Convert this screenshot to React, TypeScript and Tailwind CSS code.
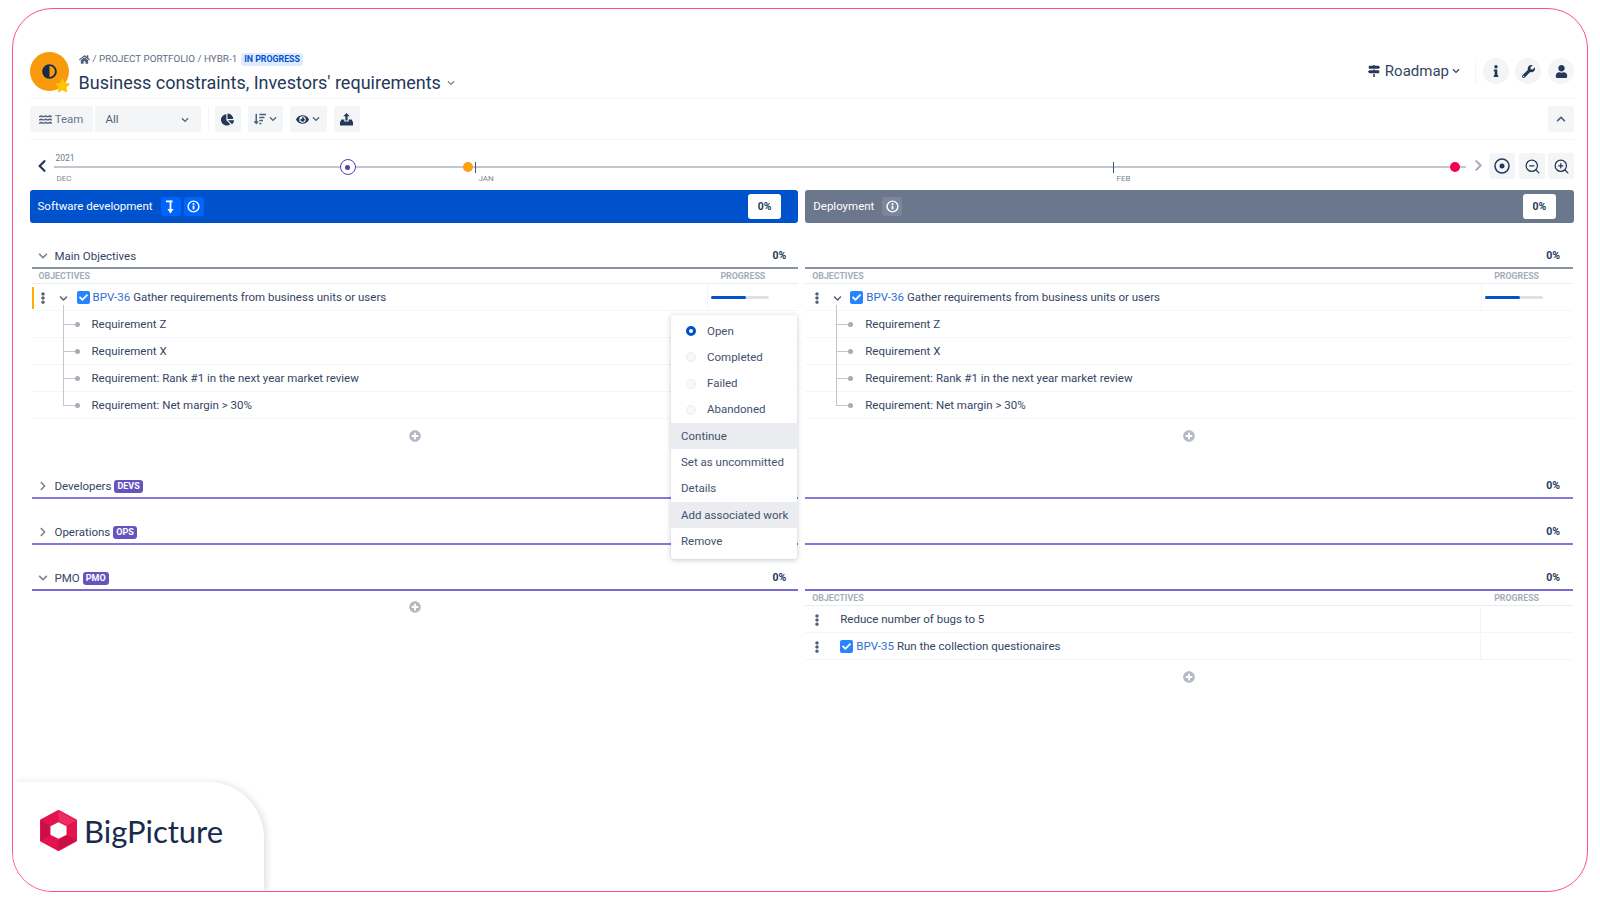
import React from "react";
import { FaHome, FaAdjust, FaStar, FaChevronDown, FaChevronUp, FaChevronLeft, FaChevronRight, FaChartPie, FaSortAmountDown, FaEye, FaInfo, FaWrench, FaUser, FaMapSigns, FaWater, FaPlusCircle, FaEllipsisV, FaCheck } from "react-icons/fa";
import { ZoomIn, ZoomOut } from "lucide-react";

const UploadIcon = () => (
  <svg width="13" height="13" viewBox="0 0 14 14" fill="#253858">
    <path d="M7 0 L10.5 3.6 H8.2 V8 H5.8 V3.6 H3.5 Z" />
    <path d="M1.5 7 H4.6 V9.2 H9.4 V7 H12.5 L14 10 V13.5 H0 V10 Z" />
  </svg>
);

const InfoRing = () => (
  <svg width="13" height="13" viewBox="0 0 13 13" fill="none">
    <circle cx="6.5" cy="6.5" r="5.4" stroke="white" strokeWidth="1.4" />
    <circle cx="6.5" cy="4" r="1" fill="white" />
    <rect x="5.6" y="5.6" width="1.8" height="3.8" fill="white" />
  </svg>
);

const ArrowDownBar = () => (
  <svg width="11" height="14" viewBox="0 0 11 14" fill="white">
    <rect x="1" y="0.5" width="6.5" height="1.8" />
    <rect x="4.6" y="0.5" width="1.8" height="10" />
    <path d="M2.4 9 H8.6 L5.5 13.5 Z" />
  </svg>
);

const DotRing = () => (
  <svg width="16" height="16" viewBox="0 0 16 16" fill="none">
    <circle cx="8" cy="8" r="7" stroke="#253858" strokeWidth="1.5" />
    <circle cx="8" cy="8" r="2.5" fill="#253858" />
  </svg>
);

const Check = () => (
  <span className="w-[13px] h-[13px] rounded-[2px] bg-[#2684ff] flex items-center justify-center shrink-0">
    <FaCheck className="text-white text-[9px]" />
  </span>
);

const Kebab = () => <FaEllipsisV className="text-[#505f79] text-[12px]" />;

const Tool = ({ children, className = "" }: { children: React.ReactNode; className?: string }) => (
  <div className={`h-[26px] bg-[#f4f5f7] rounded-[3px] flex items-center text-[#253858] ${className}`}>{children}</div>
);

const SectionHead = ({ name, badge, open, pct, line, pr = "pr-[12px]" }: { name?: string; badge?: string; open?: boolean; pct?: boolean; line: string; pr?: string }) => (
  <div className="mt-[24px]">
    <div className={`h-[20px] flex items-center ${pr}`}>
      <div className="w-[22px] mr-[1px] flex justify-center -mt-[3px]">
        {name && (open ? <FaChevronDown className="text-[#7a869a] text-[10px]" /> : <FaChevronRight className="text-[#7a869a] text-[10px]" />)}
      </div>
      {name && <span className="text-[11.5px] text-[#344563]">{name}</span>}
      {badge && <span className="ml-[3px] -mt-[2px] px-[3px] h-[13px] leading-[13px] rounded-[3px] bg-[#6554c0] text-white text-[9px] font-bold">{badge}</span>}
      {pct && <span className="ml-auto -mt-[3px] text-[10.5px] font-bold text-[#253858]">0%</span>}
    </div>
    <div className={`h-[2px] ${line}`} />
  </div>
);

const ColHead = ({ pr = "pr-[33px]" }: { pr?: string }) => (
  <div className={`h-[15px] pt-[1px] flex items-center justify-between border-b-[1.5px] border-[#ebecf0] pl-[7px] ${pr} text-[8.8px] font-bold text-[#a5adba]`}>
    <span>OBJECTIVES</span>
    <span>PROGRESS</span>
  </div>
);

const Objective = ({ marked, cell }: { marked?: boolean; cell: string }) => (
  <div className="h-[27px] flex border-b border-[#f4f5f7] relative">
    {marked && <div className="absolute left-0 top-[3px] w-[2px] h-[22px] bg-[#ffab00]" />}
    <div className="flex-1 flex items-center pt-[1px]">
      <div className="w-[23px] flex justify-center mt-[1px]"><Kebab /></div>
      <div className="w-[18px] flex justify-center mt-[1px]"><FaChevronDown className="text-[#505f79] text-[9px]" /></div>
      <div className="ml-[4px]"><Check /></div>
      <span className="ml-[3px] text-[11.5px] text-[#2f6fd6]">BPV-36</span>
      <span className="ml-[3px] text-[11.5px] text-[#344563]">Gather requirements from business units or users</span>
    </div>
    <div className={`${cell} border-l border-[#f4f5f7] flex items-center pl-[3px]`}>
      <div className="w-[58px] h-[3px] bg-[#dfe1e6] rounded-full">
        <div className="w-[35px] h-[3px] bg-[#0052cc] rounded-full" />
      </div>
    </div>
  </div>
);

const Req = ({ text, last }: { text: string; last?: boolean }) => (
  <div className="h-[27px] flex items-center pt-[1px] border-b border-[#f4f5f7] relative">
    <div className={`absolute left-[31px] top-[-6px] w-[1px] bg-[#c1c7d0] ${last ? "h-[20px]" : "h-[33px]"}`} />
    <div className="absolute left-[32px] top-[13px] w-[11px] h-[1px] bg-[#c1c7d0]" />
    <div className="absolute left-[43px] top-[11px] w-[5px] h-[5px] rounded-full bg-[#a5adba]" />
    <span className="ml-[60px] text-[11.5px] text-[#344563]">{text}</span>
  </div>
);

const Plus = () => (
  <div className="h-[34px] pt-[11px] flex justify-center">
    <FaPlusCircle className="text-[#b3bac5] text-[12px]" />
  </div>
);

const Objectives = ({ marked, cell, pr }: { marked?: boolean; cell: string; pr?: string }) => (
  <>
    <ColHead pr={pr} />
    <Objective marked={marked} cell={cell} />
    <Req text="Requirement Z" />
    <Req text="Requirement X" />
    <Req text="Requirement: Rank #1 in the next year market review" />
    <Req text="Requirement: Net margin > 30%" last />
    <Plus />
  </>
);

const Plain = ({ children }: { children: React.ReactNode }) => (
  <div className="h-[27px] flex border-b border-[#f4f5f7]">
    <div className="flex-1 flex items-center pt-[1px]">
      <div className="w-[23px] flex justify-center mt-[1px]"><Kebab /></div>
      <div className="w-[12px]" />
      {children}
    </div>
    <div className="w-[93px] border-l border-[#f4f5f7]" />
  </div>
);

const BarBtn = ({ children }: { children: React.ReactNode }) => (
  <div className="w-[20px] h-[19px] rounded-[3px] bg-[#0065ff] flex items-center justify-center text-white">{children}</div>
);

const MenuItem = ({ text, hl }: { text: string; hl?: boolean }) => (
  <div className={`h-[26.3px] flex items-center pl-[10px] text-[11.5px] text-[#42526e] ${hl ? "bg-[#ebecf0]" : ""}`}>{text}</div>
);
const Radio = ({ text, on }: { text: string; on?: boolean }) => (
  <div className="h-[26.3px] flex items-center pl-[15px] text-[11.5px] text-[#42526e]">
    {on ? (
      <span className="w-[10px] h-[10px] rounded-full border-[3px] border-[#0052cc] bg-white" />
    ) : (
      <span className="w-[10px] h-[10px] rounded-full border border-[#ebecf0] bg-[#f7f8f9]" />
    )}
    <span className="ml-[11px]">{text}</span>
  </div>
);

export default function App() {
  return (
    <div className="w-[1600px] h-[900px] bg-white pt-[8px] pl-[12px] font-['Roboto',sans-serif]">
      <div className="relative w-[1576px] h-[884px] border border-[#ff4f8b] rounded-[40px] overflow-hidden pt-[43px] pl-[16.5px] pr-[13px] bg-white">
        {/* Header */}
        <div className="h-[47px] flex items-start border-b-[1.5px] border-[#f4f5f7]">
          <div className="relative w-[39px] h-[39px] rounded-full bg-[#f89a0c] flex items-center justify-center shrink-0">
            <FaAdjust className="text-[#172b4d] text-[15px] -mt-[1px]" />
            <FaStar className="absolute left-[25px] top-[26px] text-[#ffc400] text-[15px]" />
          </div>
          <div className="ml-[10px]">
            <div className="h-[14px] flex items-center text-[9.85px] text-[#5e6c84]">
              <FaHome className="text-[#505f79] text-[11px]" />
              <span className="ml-[3px]">/ PROJECT PORTFOLIO / HYBR-1</span>
              <span className="ml-[4px] h-[13px] leading-[13px] px-[3px] rounded-[3px] bg-[#deebff] text-[#0052cc] text-[8.8px] font-bold">IN PROGRESS</span>
            </div>
            <div className="mt-[5px] flex items-center text-[#253858]">
              <span className="text-[18px] leading-[23px]">Business constraints, Investors' requirements</span>
              <FaChevronDown className="ml-[6px] text-[#7a869a] text-[8px]" />
            </div>
          </div>
          <div className="ml-auto mt-[6px] flex items-center">
            <FaMapSigns className="text-[#253858] text-[12px]" />
            <span className="ml-[5px] text-[15px] text-[#344563]">Roadmap</span>
            <FaChevronDown className="ml-[3px] text-[#344563] text-[8px]" />
            <div className="ml-[15px] w-[1px] h-[26px] bg-[#f4f5f7]" />
            <div className="ml-[7px] w-[26px] h-[26px] rounded-full bg-[#f4f5f7] flex items-center justify-center"><FaInfo className="text-[#253858] text-[12px]" /></div>
            <div className="ml-[6px] w-[26px] h-[26px] rounded-full bg-[#f4f5f7] flex items-center justify-center"><FaWrench className="text-[#253858] text-[13px]" /></div>
            <div className="ml-[7px] w-[26px] h-[26px] rounded-full bg-[#f4f5f7] flex items-center justify-center"><FaUser className="text-[#253858] text-[13px]" /></div>
          </div>
        </div>

        {/* Toolbar */}
        <div className="pt-[7px] pb-[7px] flex items-center border-b-[1.5px] border-[#f4f5f7]">
          <Tool className="w-[63px] justify-center text-[11.5px] pt-[1px]"><FaWater className="text-[#505f79] text-[13px]" /><span className="ml-[3px] text-[#6b778c]">Team</span></Tool>
          <Tool className="ml-[2px] w-[106px] justify-between pl-[11px] pr-[12px] text-[11.5px] pt-[1px]"><span className="text-[#505f79]">All</span><FaChevronDown className="text-[#505f79] text-[8px]" /></Tool>
          <div className="ml-[7px] w-[1px] h-[26px] bg-[#f4f5f7]" />
          <Tool className="ml-[6px] w-[26px] justify-center"><FaChartPie className="text-[13px]" /></Tool>
          <Tool className="ml-[7px] w-[35px] justify-center"><FaSortAmountDown className="text-[12px] text-[#505f79]" /><FaChevronDown className="ml-[3px] text-[8px] text-[#505f79]" /></Tool>
          <Tool className="ml-[7px] w-[37px] justify-center"><FaEye className="text-[13px]" /><FaChevronDown className="ml-[3px] text-[8px] text-[#505f79]" /></Tool>
          <Tool className="ml-[7px] w-[26px] justify-center"><UploadIcon /></Tool>
          <Tool className="ml-auto w-[26px] justify-center"><FaChevronUp className="text-[10px] text-[#505f79]" /></Tool>
        </div>

        {/* Timeline */}
        <div className="relative h-[50px]">
          <FaChevronLeft className="absolute left-[5px] top-[19px] text-[#253858] text-[14px]" />
          <div className="absolute left-[24px] top-[26px] w-[1397px] h-[2px] bg-[#c1c7d0]" />
          <div className="absolute left-[1425px] top-[26px] w-[11px] h-[2px] bg-[#c1c7d0]" />
          <span className="absolute left-[26px] top-[12px] text-[8.5px] text-[#6b778c]">2021</span>
          <span className="absolute left-[27px] top-[33px] text-[8px] text-[#7a869a]">DEC</span>
          <span className="absolute left-[449px] top-[33px] text-[8px] text-[#7a869a]">JAN</span>
          <span className="absolute left-[1087px] top-[33px] text-[8px] text-[#7a869a]">FEB</span>
          <div className="absolute left-[445px] top-[22px] w-[1px] h-[11px] bg-[#42526e]" />
          <div className="absolute left-[1083px] top-[22px] w-[1px] h-[11px] bg-[#42526e]" />
          <div className="absolute left-[310px] top-[19px] w-[16px] h-[16px] rounded-full border-[1.5px] border-[#5243aa] bg-white flex items-center justify-center">
            <div className="w-[5px] h-[5px] rounded-full bg-[#5243aa]" />
          </div>
          <div className="absolute left-[433px] top-[22px] w-[10px] h-[10px] rounded-full bg-[#ff9f0a]" />
          <div className="absolute left-[1420px] top-[22px] w-[10px] h-[10px] rounded-full bg-[#f5004f]" />
          <FaChevronRight className="absolute left-[1442px] top-[19px] text-[#a5adba] text-[13px]" />
          <div className="absolute right-0 top-[13px] flex gap-[3px]">
            <Tool className="w-[26px] mr-[1px] justify-center"><DotRing /></Tool>
            <Tool className="w-[26px] justify-center"><ZoomOut size={17} strokeWidth={1.8} color="#253858" /></Tool>
            <Tool className="w-[26px] justify-center"><ZoomIn size={17} strokeWidth={1.8} color="#253858" /></Tool>
          </div>
        </div>

        {/* Columns */}
        <div className="grid grid-cols-2 gap-[7px]">
          <div>
            <div className="h-[33px] rounded-[3px] bg-[#0052cc] flex items-center pl-[8px] pr-[17px]">
              <span className="text-[11.5px] text-white">Software development</span>
              <div className="ml-[8px] flex gap-[3px]">
                <BarBtn><ArrowDownBar /></BarBtn>
                <BarBtn><InfoRing /></BarBtn>
              </div>
              <div className="ml-auto w-[33px] h-[25px] rounded-[3px] bg-white flex items-center justify-center text-[10.5px] font-bold text-[#253858]">0%</div>
            </div>
            <div className="pl-[2px]">
              <SectionHead name="Main Objectives" open pct line="bg-[#8993a4]" />
              <Objectives marked cell="w-[91px]" />
              <SectionHead name="Developers" badge="DEVS" line="bg-[#8777d9]" />
              <SectionHead name="Operations" badge="OPS" line="bg-[#8777d9]" />
              <SectionHead name="PMO" badge="PMO" open pct line="bg-[#7a6bd0]" />
              <div className="h-[34px] pt-[10px] flex justify-center"><FaPlusCircle className="text-[#b3bac5] text-[12px]" /></div>
            </div>
          </div>
          <div>
            <div className="h-[33px] rounded-[3px] bg-[#6b778c] flex items-center pl-[8px] pr-[18px]">
              <span className="text-[11.5px] text-white">Deployment</span>
              <div className="ml-[8px] w-[20px] h-[19px] rounded-[3px] bg-[#7a869a] flex items-center justify-center"><InfoRing /></div>
              <div className="ml-auto w-[33px] h-[25px] rounded-[3px] bg-white flex items-center justify-center text-[10.5px] font-bold text-[#253858]">0%</div>
            </div>
            <div className="pr-[1px]">
              <SectionHead pct line="bg-[#8993a4]" pr="pr-[13px]" />
              <Objectives cell="w-[92px]" pr="pr-[34px]" />
              <SectionHead pct line="bg-[#8777d9]" pr="pr-[13px]" />
              <SectionHead pct line="bg-[#8777d9]" pr="pr-[13px]" />
              <SectionHead pct line="bg-[#7a6bd0]" pr="pr-[13px]" />
              <ColHead pr="pr-[34px]" />
              <Plain><span className="text-[11.5px] text-[#344563]">Reduce number of bugs to 5</span></Plain>
              <Plain>
                <Check />
                <span className="ml-[3px] text-[11.5px] text-[#2f6fd6]">BPV-35</span>
                <span className="ml-[3px] text-[11.5px] text-[#344563]">Run the collection questionaires</span>
              </Plain>
              <Plus />
            </div>
          </div>
        </div>

        {/* Context menu */}
        <div className="absolute left-[658px] top-[306px] w-[126px] h-[244px] bg-white rounded-[3px] shadow-[0_1px_5px_rgba(9,30,66,0.25)] pt-[3px]">
          <Radio text="Open" on />
          <Radio text="Completed" />
          <Radio text="Failed" />
          <Radio text="Abandoned" />
          <MenuItem text="Continue" hl />
          <MenuItem text="Set as uncommitted" />
          <MenuItem text="Details" />
          <MenuItem text="Add associated work" hl />
          <MenuItem text="Remove" />
        </div>

        {/* Logo card */}
        <div className="absolute left-0 bottom-0 w-[251px] h-[109px] bg-white rounded-tr-[56px] shadow-[3px_0_6px_rgba(9,30,66,0.12)] flex items-start pl-[27px] pt-[28px]">
          <svg width="37" height="41" viewBox="0 0 37 41">
            <path fillRule="evenodd" fill="#e2134f" stroke="#e2134f" strokeWidth="2" strokeLinejoin="round" d="M18.5 1 L36 10.5 V30.5 L18.5 40 L1 30.5 V10.5 Z M18.5 11 L9.5 15.5 V25.5 L18.5 30 L27.5 25.5 V15.5 Z" />
            <path fill="#c90f45" d="M1 10.5 L9.5 15.5 V25.5 L1 30.5 Z M18.5 30 L27.5 25.5 L36 30.5 L18.5 40 Z" />
            <path fill="#f02a62" d="M18.5 1 L36 10.5 L27.5 15.5 L18.5 11 Z" />
          </svg>
          <span className="ml-[7px] mt-[3px] text-[31px] leading-[36px] text-[#172b4d] font-['Lato',sans-serif]">BigPicture</span>
        </div>
      </div>
    </div>
  );
}
